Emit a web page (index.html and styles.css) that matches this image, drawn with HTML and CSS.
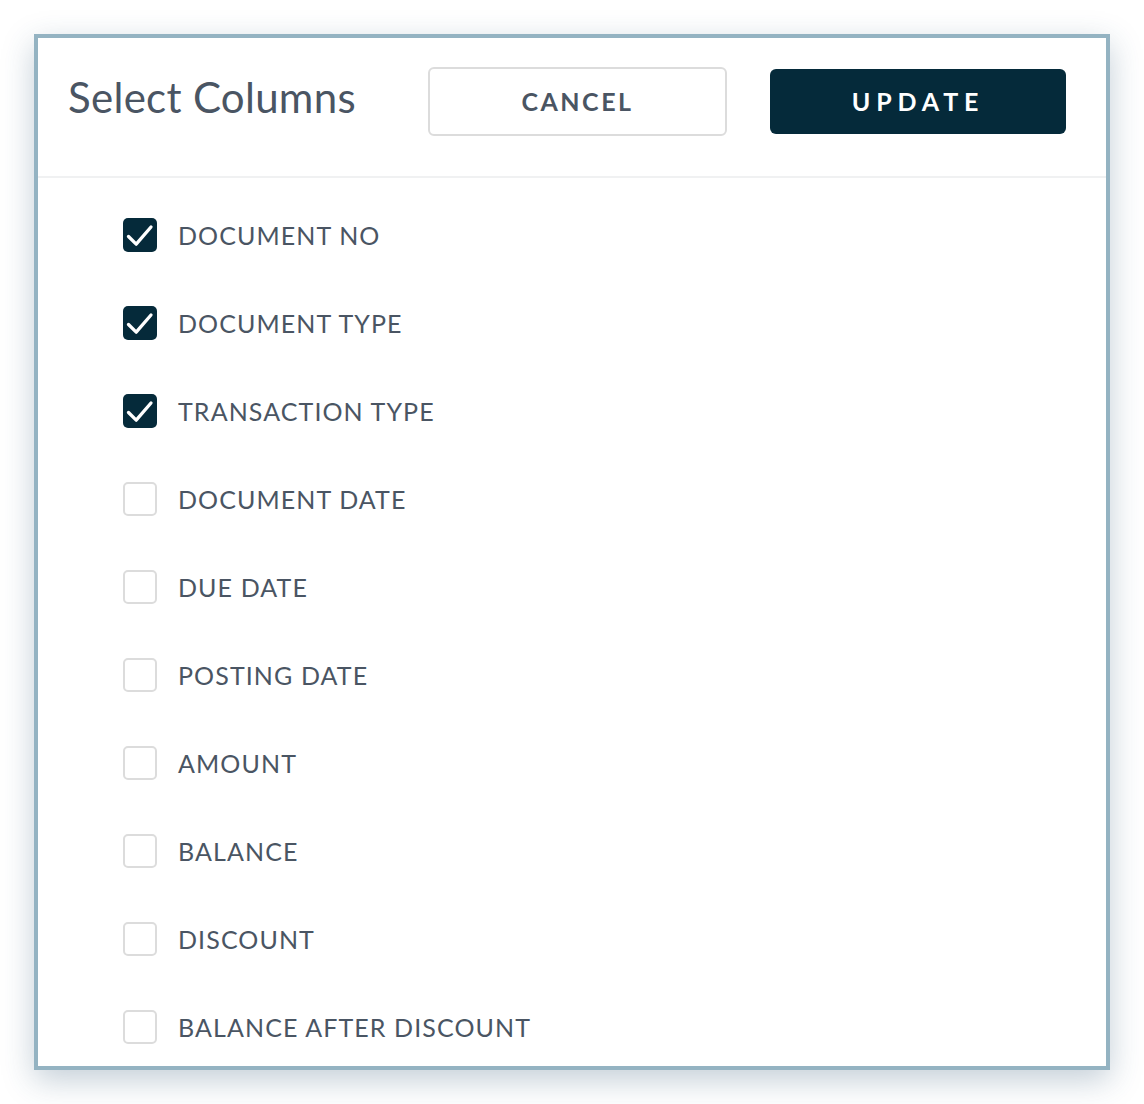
FILE: index.html
```html
<!DOCTYPE html>
<html lang="en">
<head>
    <meta charset="UTF-8">
    <title>Select Columns</title>
    <link rel="stylesheet" href="styles.css">
</head>
<body>
    <div class="columns-panel">
        <div class="panel-header">
            <h2 class="panel-title">Select Columns</h2>
            <div class="header-actions">
                <button type="button" class="btn btn-cancel">CANCEL</button>
                <button type="button" class="btn btn-update">UPDATE</button>
            </div>
        </div>
        <ul class="column-list">
            <li class="column-item">
                <span class="check checked">
                    <svg viewBox="0 0 34 34"><polyline points="5.5,18.5 13.2,26.2 28,9"/></svg>
                </span>
                <span class="column-label">DOCUMENT NO</span>
            </li>
            <li class="column-item">
                <span class="check checked">
                    <svg viewBox="0 0 34 34"><polyline points="5.5,18.5 13.2,26.2 28,9"/></svg>
                </span>
                <span class="column-label">DOCUMENT TYPE</span>
            </li>
            <li class="column-item">
                <span class="check checked">
                    <svg viewBox="0 0 34 34"><polyline points="5.5,18.5 13.2,26.2 28,9"/></svg>
                </span>
                <span class="column-label">TRANSACTION TYPE</span>
            </li>
            <li class="column-item">
                <span class="check"></span>
                <span class="column-label">DOCUMENT DATE</span>
            </li>
            <li class="column-item">
                <span class="check"></span>
                <span class="column-label">DUE DATE</span>
            </li>
            <li class="column-item">
                <span class="check"></span>
                <span class="column-label">POSTING DATE</span>
            </li>
            <li class="column-item">
                <span class="check"></span>
                <span class="column-label">AMOUNT</span>
            </li>
            <li class="column-item">
                <span class="check"></span>
                <span class="column-label">BALANCE</span>
            </li>
            <li class="column-item">
                <span class="check"></span>
                <span class="column-label">DISCOUNT</span>
            </li>
            <li class="column-item">
                <span class="check"></span>
                <span class="column-label">BALANCE AFTER DISCOUNT</span>
            </li>
        </ul>
    </div>
</body>
</html>
```

FILE: styles.css
```css
body {
    margin: 0;
    padding: 34px;
    font-family: 'Lato', 'Liberation Sans', sans-serif;
    background: #fff;
    color: #4a5563;
}

.columns-panel {
    box-sizing: border-box;
    width: 1076px;
    height: 1036px;
    border: 4px solid #94b3c2;
    background: #fff;
    box-shadow: 0 10px 30px rgba(40, 80, 110, 0.28);
    display: flex;
    flex-direction: column;
    overflow: hidden;
}

.panel-header {
    box-sizing: border-box;
    display: flex;
    align-items: center;
    height: 140px;
    padding: 0 40px 12px 30px;
    border-bottom: 2px solid #f0f1f2;
    flex-shrink: 0;
}

.panel-title {
    margin: 0 0 8px;
    font-size: 42px;
    font-weight: 400;
    letter-spacing: 0.3px;
    color: #4a5563;
}

.header-actions {
    margin-left: auto;
    display: flex;
    align-items: center;
    gap: 43px;
}

.btn {
    font-family: 'Lato', 'Liberation Sans', sans-serif;
    font-weight: 700;
    font-size: 25px;
    border-radius: 6px;
    cursor: pointer;
}

.btn-cancel {
    width: 299px;
    height: 69px;
    background: #fff;
    border: 2px solid #dcdcdc;
    color: #4a5563;
    letter-spacing: 2.5px;
}

.btn-update {
    width: 296px;
    height: 65px;
    background: #052a3a;
    border: none;
    color: #fff;
    letter-spacing: 5.8px;
}

.column-list {
    list-style: none;
    margin: 0;
    padding: 13px 0 0 85px;
}

.column-item {
    display: flex;
    align-items: center;
    height: 88px;
}

.check {
    box-sizing: border-box;
    width: 34px;
    height: 34px;
    border: 2px solid #dcdcdc;
    border-radius: 5px;
    margin-right: 21px;
    flex-shrink: 0;
}

.check.checked {
    border: none;
    background: #052a3a;
}

.check svg {
    display: block;
    width: 34px;
    height: 34px;
    fill: none;
    stroke: #fff;
    stroke-width: 3.3;
    stroke-linecap: round;
    stroke-linejoin: round;
}

.column-label {
    font-size: 25px;
    letter-spacing: 1.1px;
    color: #4a5563;
}
```
